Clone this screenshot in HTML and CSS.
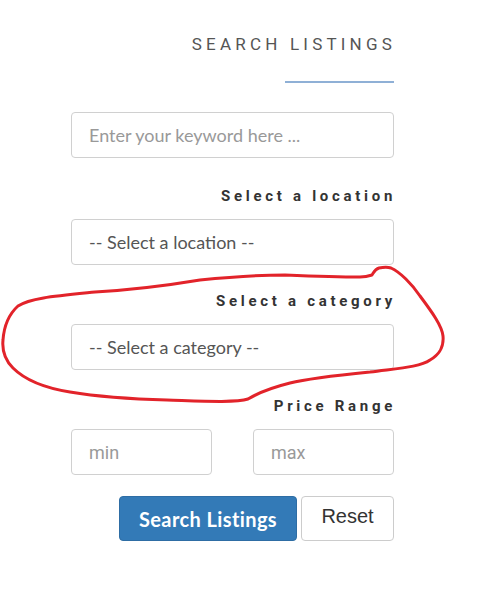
FILE: index.html
```
<!DOCTYPE html>
<html>
<head>
<meta charset="utf-8">
<link rel="stylesheet" href="styles.css">
</head>
<body>
<div class="page">
  <form class="search">
    <h2 class="title">Search Listings</h2>
    <div class="rule"></div>
    <input class="control keyword" type="text" placeholder="Enter your keyword here ...">
    <label class="label">Select a location</label>
    <div class="control select">-- Select a location --</div>
    <label class="label">Select a category</label>
    <div class="control select">-- Select a category --</div>
    <label class="label">Price Range</label>
    <div class="price">
      <input class="control small" type="text" placeholder="min">
      <input class="control small" type="text" placeholder="max">
    </div>
    <div class="actions">
      <button type="button" class="btn primary">Search Listings</button>
      <button type="button" class="btn plain">Reset</button>
    </div>
  </form>
  <svg class="scribble" width="500" height="593" viewBox="0 0 500 593">
    <path d="M360 277 C365 277 369 276 372 275 C374 272 375 269 379 268 C384 267 388 267 391 268 C400 272 412 284 420 296 C432 312 442 326 443 336 C444 347 440 354 430 360 C420 367 400 368 370 372 C340 375 310 378 290 383 C270 388 258 393 248 399 C236 403 200 401 167 400 C130 399 100 397 70 392 C45 388 25 380 13 368 C5 360 2 350 3 340 C4 326 8 315 18 306 C30 298 55 296 95 292 C130 290 170 285 200 280 C230 277 255 275 285 275 C310 276 335 277 360 277" fill="none" stroke="#e2232a" stroke-width="3" stroke-linecap="round" stroke-linejoin="round"/>
  </svg>
</div>
</body>
</html>
```
FILE: styles.css
```
html, body {
  margin: 0;
  padding: 0;
  background: #fff;
}
.page {
  position: relative;
  width: 500px;
  height: 593px;
  overflow: hidden;
}
.search {
  width: 323px;
  margin-left: 71px;
  padding-top: 33px;
  display: flex;
  flex-direction: column;
  align-items: stretch;
}
.title {
  margin: 0;
  margin-right: -2px;
  text-align: right;
  font-family: Roboto, "Liberation Sans", sans-serif;
  font-weight: 400;
  font-size: 17px;
  line-height: 22px;
  letter-spacing: 4.2px;
  text-transform: uppercase;
  color: #555;
}
.rule {
  align-self: flex-end;
  width: 109px;
  height: 2px;
  margin-top: 26px;
  background: #8fb0d6;
}
.control {
  box-sizing: border-box;
  height: 46px;
  border: 1px solid #d0d0d0;
  border-radius: 4px;
  background: #fff;
  padding: 0 17px;
  font-family: Lato, "Open Sans", sans-serif;
  font-size: 18px;
  color: #555;
  outline: none;
  display: flex;
  align-items: center;
}
.keyword {
  margin-top: 29px;
  margin-bottom: 2px;
  width: 100%;
}
.keyword::placeholder {
  color: #999;
}
.label {
  margin-top: 26px;
  margin-bottom: 13px;
  margin-right: -2px;
  text-align: right;
  font-family: Roboto, "Liberation Sans", sans-serif;
  font-weight: 700;
  font-size: 15px;
  line-height: 20px;
  letter-spacing: 3.7px;
  color: #333;
}
.price {
  display: flex;
  justify-content: space-between;
}
.small {
  width: 141px;
  font-family: Roboto, "Liberation Sans", sans-serif;
  font-size: 18px;
}
.small::placeholder {
  color: #999;
}
.actions {
  margin-top: 21px;
  display: flex;
  justify-content: flex-end;
  gap: 4px;
}
.btn {
  box-sizing: border-box;
  height: 45px;
  border-radius: 4px;
  cursor: pointer;
  padding: 0;
}
.primary {
  width: 178px;
  background: #337ab7;
  border: 1px solid #2e6da4;
  color: #fff;
  font-family: Lato, "Open Sans", sans-serif;
  font-weight: 700;
  font-size: 20px;
  letter-spacing: 0.4px;
}
.plain {
  width: 93px;
  background: #fff;
  border: 1px solid #ccc;
  color: #333;
  font-family: "Liberation Sans", Arial, sans-serif;
  font-size: 20px;
  padding-bottom: 5px;
}
.scribble {
  position: absolute;
  left: 0;
  top: 0;
  pointer-events: none;
}
```
